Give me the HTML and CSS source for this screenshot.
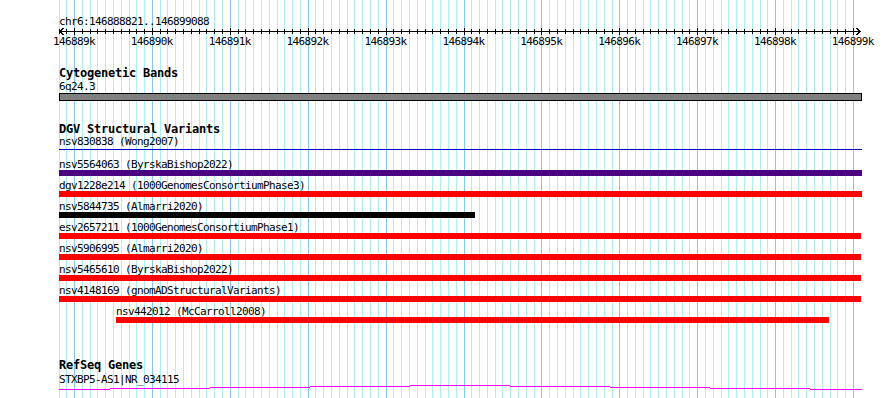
FILE: index.html
```html
<!DOCTYPE html>
<html lang="en">
<head>
    <meta charset="UTF-8">
    <meta name="viewport" content="width=device-width, initial-scale=1.0">
    <title>chr6:146888821..146899088</title>
    <link rel="stylesheet" href="styles.css">
</head>
<body>
<div class="browser">
    <!-- 100bp grid behind the tracks -->
    <svg class="grid" width="890" height="398">
        <path class="minor" d="M59.5 0V398M66.5 0V398M82.5 0V398M90.5 0V398M97.5 0V398M105.5 0V398M113.5 0V398M121.5 0V398M129.5 0V398M136.5 0V398M144.5 0V398M160.5 0V398M167.5 0V398M175.5 0V398M183.5 0V398M191.5 0V398M199.5 0V398M206.5 0V398M214.5 0V398M222.5 0V398M238.5 0V398M245.5 0V398M253.5 0V398M261.5 0V398M269.5 0V398M277.5 0V398M284.5 0V398M292.5 0V398M300.5 0V398M315.5 0V398M323.5 0V398M331.5 0V398M339.5 0V398M347.5 0V398M354.5 0V398M362.5 0V398M370.5 0V398M378.5 0V398M393.5 0V398M401.5 0V398M409.5 0V398M417.5 0V398M425.5 0V398M432.5 0V398M440.5 0V398M448.5 0V398M456.5 0V398M471.5 0V398M479.5 0V398M487.5 0V398M495.5 0V398M502.5 0V398M510.5 0V398M518.5 0V398M526.5 0V398M534.5 0V398M549.5 0V398M557.5 0V398M565.5 0V398M573.5 0V398M580.5 0V398M588.5 0V398M596.5 0V398M604.5 0V398M612.5 0V398M627.5 0V398M635.5 0V398M643.5 0V398M650.5 0V398M658.5 0V398M666.5 0V398M674.5 0V398M682.5 0V398M689.5 0V398M705.5 0V398M713.5 0V398M721.5 0V398M728.5 0V398M736.5 0V398M744.5 0V398M752.5 0V398M760.5 0V398M767.5 0V398M783.5 0V398M791.5 0V398M798.5 0V398M806.5 0V398M814.5 0V398M822.5 0V398M830.5 0V398M837.5 0V398M845.5 0V398"/>
        <path class="major" d="M74.5 0V398M152.5 0V398M230.5 0V398M308.5 0V398M386.5 0V398M464.5 0V398M541.5 0V398M619.5 0V398M697.5 0V398M775.5 0V398M853.5 0V398"/>
    </svg>

    <div class="tracks">
        <div class="ruler">
            <div class="label">chr6:146888821..146899088</div>
            <svg class="axis" width="890" height="9">
                <path d="M59 4.5H861M63.5 1L60 4.5L63.5 8M856.5 1L860 4.5L856.5 8"/>
                <path d="M59.5 2v5M66.5 2v5M82.5 2v5M90.5 2v5M97.5 2v5M105.5 2v5M113.5 2v5M121.5 2v5M129.5 2v5M136.5 2v5M144.5 2v5M160.5 2v5M167.5 2v5M175.5 2v5M183.5 2v5M191.5 2v5M199.5 2v5M206.5 2v5M214.5 2v5M222.5 2v5M238.5 2v5M245.5 2v5M253.5 2v5M261.5 2v5M269.5 2v5M277.5 2v5M284.5 2v5M292.5 2v5M300.5 2v5M315.5 2v5M323.5 2v5M331.5 2v5M339.5 2v5M347.5 2v5M354.5 2v5M362.5 2v5M370.5 2v5M378.5 2v5M393.5 2v5M401.5 2v5M409.5 2v5M417.5 2v5M425.5 2v5M432.5 2v5M440.5 2v5M448.5 2v5M456.5 2v5M471.5 2v5M479.5 2v5M487.5 2v5M495.5 2v5M502.5 2v5M510.5 2v5M518.5 2v5M526.5 2v5M534.5 2v5M549.5 2v5M557.5 2v5M565.5 2v5M573.5 2v5M580.5 2v5M588.5 2v5M596.5 2v5M604.5 2v5M612.5 2v5M627.5 2v5M635.5 2v5M643.5 2v5M650.5 2v5M658.5 2v5M666.5 2v5M674.5 2v5M682.5 2v5M689.5 2v5M705.5 2v5M713.5 2v5M721.5 2v5M728.5 2v5M736.5 2v5M744.5 2v5M752.5 2v5M760.5 2v5M767.5 2v5M783.5 2v5M791.5 2v5M798.5 2v5M806.5 2v5M814.5 2v5M822.5 2v5M830.5 2v5M837.5 2v5M845.5 2v5"/>
                <path d="M74.5 1v7M152.5 1v7M230.5 1v7M308.5 1v7M386.5 1v7M464.5 1v7M541.5 1v7M619.5 1v7M697.5 1v7M775.5 1v7M853.5 1v7"/>
            </svg>
            <div class="ticks">
                <span>146889k</span>
                <span>146890k</span>
                <span>146891k</span>
                <span>146892k</span>
                <span>146893k</span>
                <span>146894k</span>
                <span>146895k</span>
                <span>146896k</span>
                <span>146897k</span>
                <span>146898k</span>
                <span>146899k</span>
            </div>
        </div>

        <div class="track cyto">
            <h2>Cytogenetic Bands</h2>
            <div class="label">6q24.3</div>
            <div class="band"></div>
        </div>

        <div class="track dgv">
            <h2>DGV Structural Variants</h2>
            <div class="feature">
                <div class="label">nsv830838 (Wong2007)</div>
                <div class="span"><div class="line" style="width:803px"></div></div>
            </div>
            <div class="feature">
                <div class="label">nsv5564063 (ByrskaBishop2022)</div>
                <div class="span"><div class="bar purple" style="width:803px"></div></div>
            </div>
            <div class="feature">
                <div class="label">dgv1228e214 (1000GenomesConsortiumPhase3)</div>
                <div class="span"><div class="bar red" style="width:803px"></div></div>
            </div>
            <div class="feature">
                <div class="label">nsv5844735 (Almarri2020)</div>
                <div class="span"><div class="bar black" style="width:416px"></div></div>
            </div>
            <div class="feature">
                <div class="label">esv2657211 (1000GenomesConsortiumPhase1)</div>
                <div class="span"><div class="bar red" style="width:802px"></div></div>
            </div>
            <div class="feature">
                <div class="label">nsv5906995 (Almarri2020)</div>
                <div class="span"><div class="bar red" style="width:802px"></div></div>
            </div>
            <div class="feature">
                <div class="label">nsv5465610 (ByrskaBishop2022)</div>
                <div class="span"><div class="bar red" style="width:802px"></div></div>
            </div>
            <div class="feature">
                <div class="label">nsv4148169 (gnomADStructuralVariants)</div>
                <div class="span"><div class="bar red" style="width:802px"></div></div>
            </div>
            <div class="feature" style="margin-left:57px">
                <div class="label">nsv442012 (McCarroll2008)</div>
                <div class="span"><div class="bar red" style="width:713px"></div></div>
            </div>
        </div>

        <div class="track refseq">
            <h2>RefSeq Genes</h2>
            <div class="label">STXBP5-AS1|NR_034115</div>
            <svg class="gene" width="890" height="6">
                <path d="M59 4.5H110M110 3.5H210M210 2.5H310M310 1.5H410M410 0.5H510M510 1.5H610M610 2.5H710M710 3.5H810M810 4.5H862"/>
            </svg>
        </div>
    </div>
</div>
</body>
</html>
```

FILE: styles.css
```css
body {
    margin: 0;
    background: #fff;
    color: #000;
    font-family: "DejaVu Sans Mono", "Liberation Mono", monospace;
}
.browser {
    position: relative;
    width: 890px;
    height: 398px;
    overflow: hidden;
}
.grid {
    position: absolute;
    left: 0;
    top: 0;
    shape-rendering: crispEdges;
}
.grid path {
    fill: none;
    stroke-width: 1;
}
.grid .minor {
    stroke: #aeeeee;
}
.grid .major {
    stroke: #86c8ea;
}
.tracks {
    position: relative;
    width: 803px;
    padding: 16px 0 0 59px;
}
.label {
    font-size: 11px;
    letter-spacing: -0.62px;
    line-height: 11px;
    white-space: nowrap;
}
h2 {
    margin: 0;
    font-size: 12px;
    font-weight: bold;
    letter-spacing: -0.22px;
    line-height: 14px;
    white-space: nowrap;
}
.axis, .gene {
    display: block;
    margin-left: -59px;
    shape-rendering: crispEdges;
}
.axis path, .gene path {
    fill: none;
    stroke-width: 1;
}
.axis path {
    stroke: #000;
}
.ticks {
    display: flex;
    margin-left: -24px;
    font-size: 11px;
    letter-spacing: -0.62px;
    line-height: 11px;
}
.ticks span {
    flex: none;
    width: 77.9px;
    text-align: center;
}
.cyto {
    margin-top: 19px;
}
.cyto .label {
    margin-top: 1px;
}
.band {
    box-sizing: border-box;
    height: 8px;
    margin-top: 1px;
    border: 1px solid #000;
    background: #808080;
}
.dgv {
    margin-top: 21px;
}
.feature {
    margin-bottom: 4px;
}
.span {
    height: 6px;
}
.line {
    height: 1px;
    margin-top: 2px;
    background: #0000cd;
}
.bar {
    height: 6px;
}
.purple {
    background: #4b0082;
}
.red {
    background: #ff0000;
}
.black {
    background: #000;
}
.refseq {
    margin-top: 35px;
}
.refseq .label {
    margin-top: 2px;
}
.gene path {
    stroke: #ff00ff;
}
```
